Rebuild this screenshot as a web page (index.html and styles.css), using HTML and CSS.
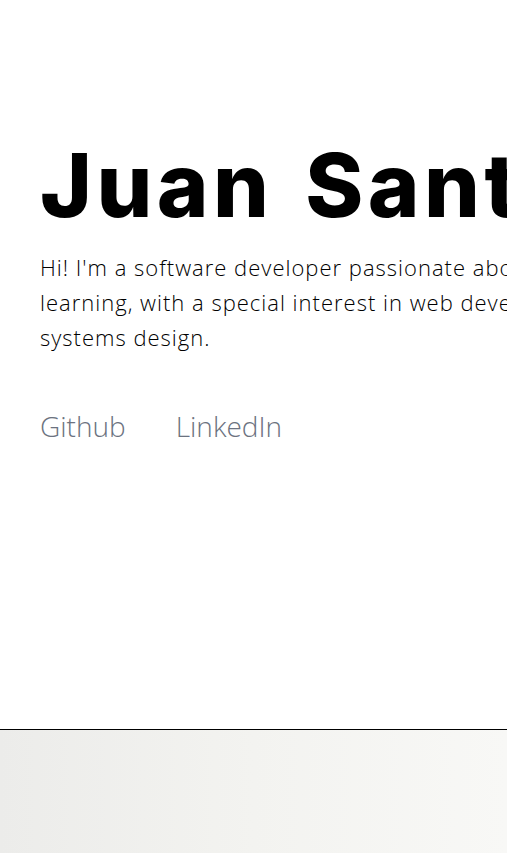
FILE: index.html
```html
<!DOCTYPE html>
<html lang="en">
<head>
<meta charset="utf-8">
<title>Juan Santos</title>
<link rel="stylesheet" href="styles.css">
</head>
<body>
<main class="page">
  <section class="hero">
    <h1 class="name">Juan Santos</h1>
    <p class="intro">Hi! I'm a software developer passionate about machine learning, with a special interest in web development and systems design.</p>
    <nav class="links">
      <a class="link" href="#">Github</a>
      <a class="link" href="#">LinkedIn</a>
    </nav>
  </section>
  <section class="band"></section>
</main>
</body>
</html>
```

FILE: styles.css
```css
html, body {
  margin: 0;
  padding: 0;
  background: #ffffff;
  overflow: hidden;
}
.page {
  width: 100%;
}
.hero {
  height: 730px;
  box-sizing: border-box;
  padding: 130px 0 0 40px;
  border-bottom: 1px solid #000;
}
.name {
  margin: 0;
  font-family: Inter, sans-serif;
  font-weight: 800;
  font-size: 88px;
  line-height: 110px;
  color: #000;
  white-space: nowrap;
  letter-spacing: 4.5px;
  word-spacing: 8px;
}
.intro {
  margin: 10px 0 0 0;
  width: 650px;
  font-family: "Open Sans", sans-serif;
  font-weight: 300;
  font-size: 22px;
  letter-spacing: 1px;
  line-height: 35px;
  color: #000;
}
.links {
  display: flex;
  gap: 50px;
  margin-top: 52px;
}
.link {
  font-family: "Open Sans", sans-serif;
  font-weight: 300;
  font-size: 28px;
  color: #6b7280;
  text-decoration: none;
}
.band {
  height: 123px;
  background: linear-gradient(90deg, #ececea 0%, #f3f3f0 50%, #f8f8f6 100%);
}
```
